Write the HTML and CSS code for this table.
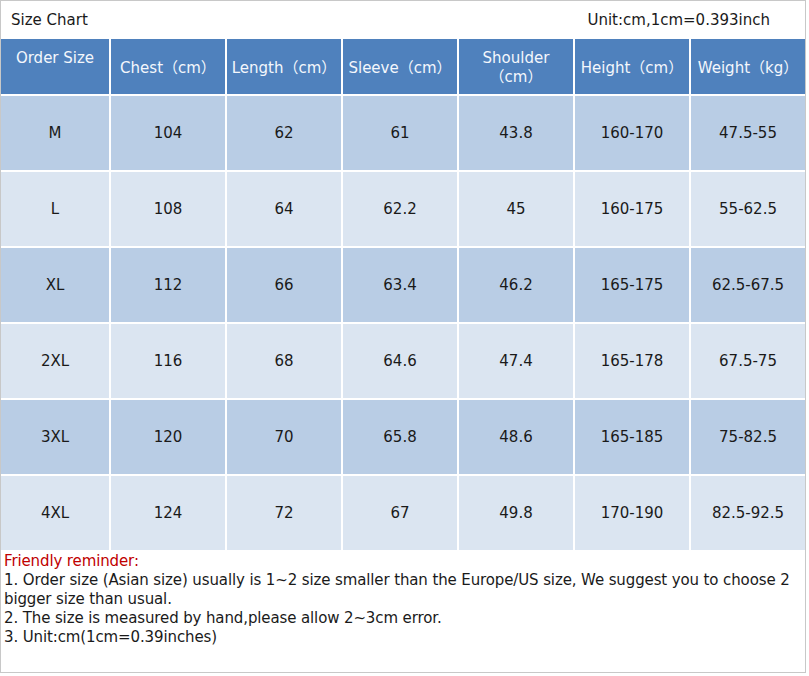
FILE: index.html
```html
<!DOCTYPE html>
<html>
<head>
<meta charset="utf-8">
<link rel="stylesheet" href="styles.css">
</head>
<body>
<div class="sheet">
  <div class="title-row">
    <span class="title">Size Chart</span>
    <span class="unit">Unit:cm,1cm=0.393inch</span>
  </div>
  <div class="grid">
    <div class="hd hd-top">Order Size</div>
    <div class="hd">Chest（cm）</div>
    <div class="hd">Length（cm）</div>
    <div class="hd">Sleeve（cm）</div>
    <div class="hd">Shoulder<br>（cm）</div>
    <div class="hd">Height（cm）</div>
    <div class="hd">Weight（kg）</div>

    <div class="c dark">M</div><div class="c dark">104</div><div class="c dark">62</div><div class="c dark">61</div><div class="c dark">43.8</div><div class="c dark">160-170</div><div class="c dark">47.5-55</div>
    <div class="c light">L</div><div class="c light">108</div><div class="c light">64</div><div class="c light">62.2</div><div class="c light">45</div><div class="c light">160-175</div><div class="c light">55-62.5</div>
    <div class="c dark">XL</div><div class="c dark">112</div><div class="c dark">66</div><div class="c dark">63.4</div><div class="c dark">46.2</div><div class="c dark">165-175</div><div class="c dark">62.5-67.5</div>
    <div class="c light">2XL</div><div class="c light">116</div><div class="c light">68</div><div class="c light">64.6</div><div class="c light">47.4</div><div class="c light">165-178</div><div class="c light">67.5-75</div>
    <div class="c dark">3XL</div><div class="c dark">120</div><div class="c dark">70</div><div class="c dark">65.8</div><div class="c dark">48.6</div><div class="c dark">165-185</div><div class="c dark">75-82.5</div>
    <div class="c light">4XL</div><div class="c light">124</div><div class="c light">72</div><div class="c light">67</div><div class="c light">49.8</div><div class="c light">170-190</div><div class="c light">82.5-92.5</div>
  </div>
  <div class="notes">
    <div class="reminder">Friendly reminder:</div>
    <div>1. Order size (Asian size) usually is 1~2 size smaller than the Europe/US size, We suggest you to choose 2 bigger size than usual.</div>
    <div>2. The size is measured by hand,please allow 2~3cm error.</div>
    <div>3. Unit:cm(1cm=0.39inches)</div>
  </div>
</div>
</body>
</html>
```
FILE: styles.css
```css
html, body {
  margin: 0;
  padding: 0;
  background: #ffffff;
}
body {
  font-family: "DejaVu Sans", Verdana, "Noto Sans CJK SC", sans-serif;
  font-size: 15px;
  color: #1a1a1a;
}
.sheet {
  width: 804px;
  height: 671px;
  border: 1px solid #c8c8c8;
  display: flex;
  flex-direction: column;
}
.title-row {
  height: 38px;
  display: flex;
  align-items: center;
  justify-content: space-between;
  padding: 0 35px 0 10px;
}
.grid {
  display: grid;
  grid-template-columns: 108px repeat(6, 114px);
  grid-template-rows: 55px repeat(6, 74px);
  column-gap: 2px;
  row-gap: 2px;
  background: #ffffff;
}
.hd {
  background: #4f81bd;
  color: #f4f7fc;
  display: flex;
  align-items: center;
  justify-content: center;
  text-align: center;
  line-height: 19px;
  padding-top: 3px;
}
.hd-top {
  align-items: flex-start;
  padding-top: 10px;
}
.c {
  display: flex;
  align-items: center;
  justify-content: center;
}
.dark {
  background: #b9cde5;
}
.light {
  background: #dbe5f1;
}
.notes {
  padding: 2px 0 0 3px;
  line-height: 19px;
  letter-spacing: -0.12px;
}
.reminder {
  color: #c00000;
}
```
